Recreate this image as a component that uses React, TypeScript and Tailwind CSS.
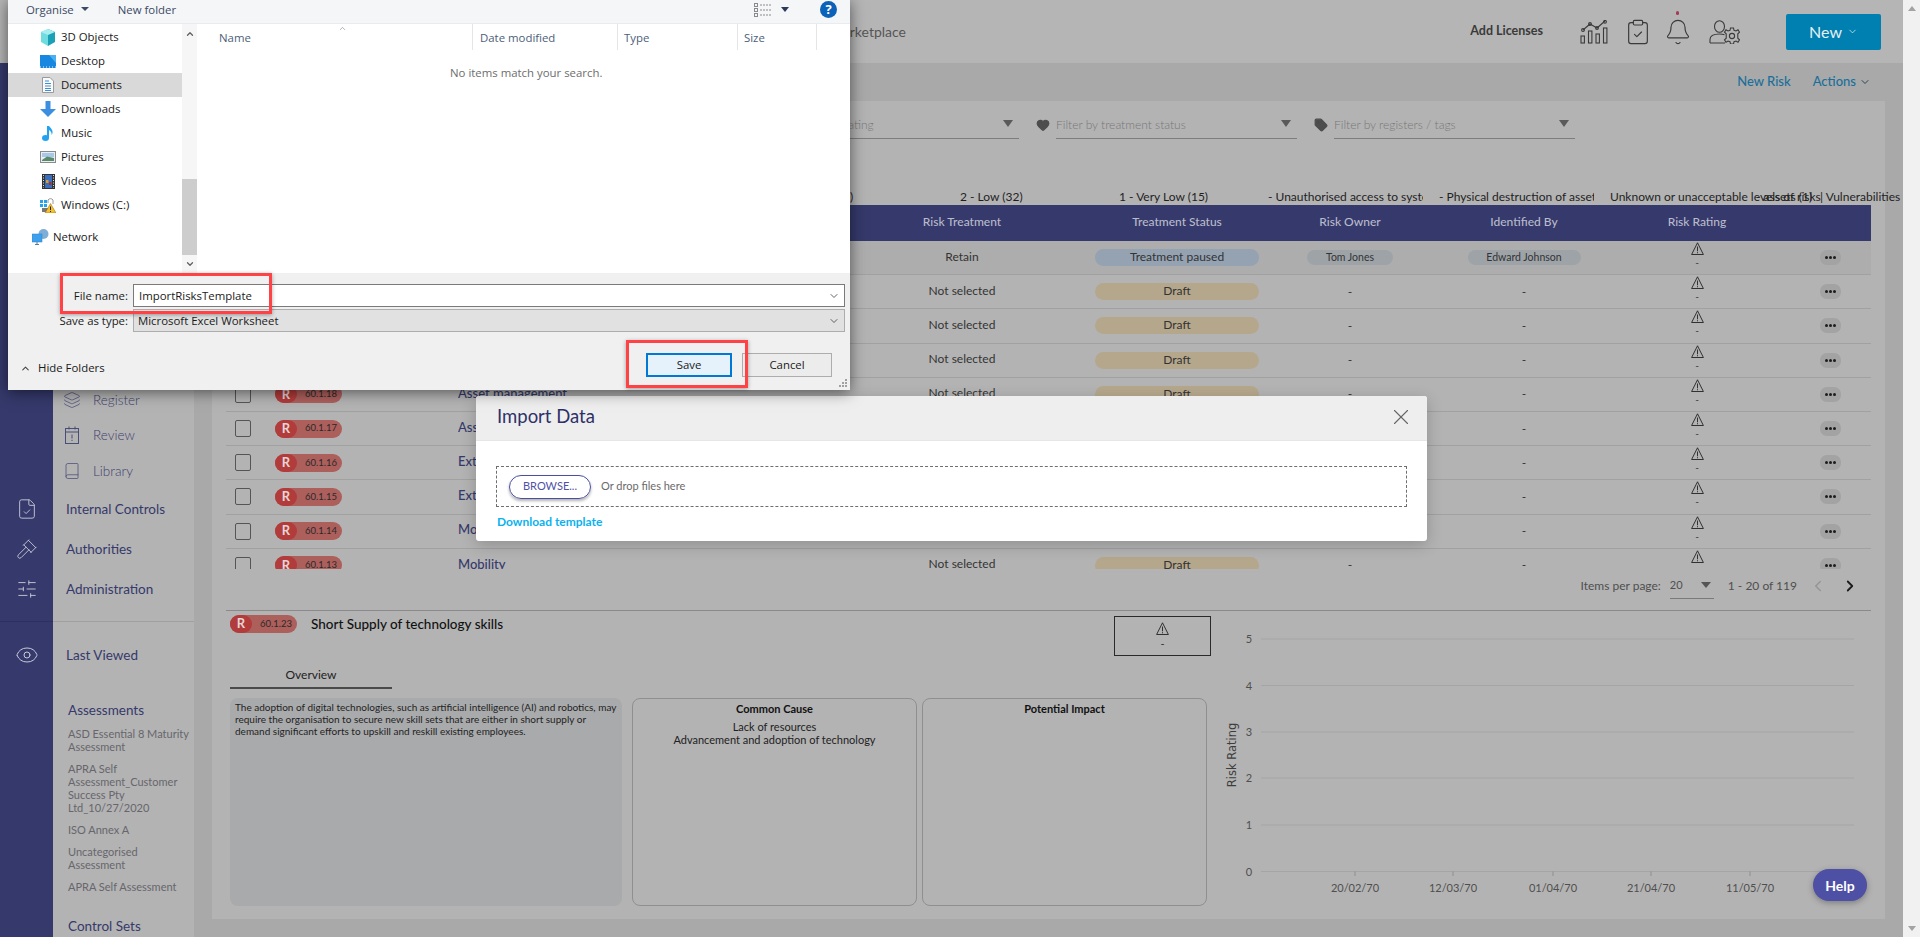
import React from "react";
import { Bell, Book, ChevronDown, ChevronLeft, ChevronRight, ChevronUp, ClipboardCheck, Eye, FileCheck, Gavel, Heart, Layers, SlidersHorizontal, Tag, X } from "lucide-react";

const rows = [
  ["60.1.23", "Short Supply of technology skills", "Retain", "Treatment paused", "Tom Jones", "Edward Johnson"],
  ["60.1.21", "Cyber security breach", "Not selected", "Draft", "-", "-"],
  ["60.1.20", "Data loss", "Not selected", "Draft", "-", "-"],
  ["60.1.19", "Asset management", "Not selected", "Draft", "-", "-"],
  ["60.1.18", "Asset management", "Not selected", "Draft", "-", "-"],
  ["60.1.17", "Asset management", "Not selected", "Draft", "-", "-"],
  ["60.1.16", "External parties", "Not selected", "Draft", "-", "-"],
  ["60.1.15", "External parties", "Not selected", "Draft", "-", "-"],
  ["60.1.14", "Mobility", "Not selected", "Draft", "-", "-"],
  ["60.1.13", "Mobility", "Not selected", "Draft", "-", "-"],
];

function Warn() {
  return (
    <svg width="13" height="13" viewBox="0 0 13 13" fill="none" stroke="#222222" strokeWidth="0.9">
      <path d="M6.500 0.800 L12.400 12.500 H0.600 Z" />
      <path d="M6.500 4.500 V9.300 M6.500 10.200 V11.300" />
    </svg>
  );
}

function ReviewIcon() {
  return (
    <svg width="18" height="18" viewBox="0 0 18 18" fill="none" stroke="#4a4d78" strokeWidth="1">
      <rect x="2.500" y="2.500" width="13" height="15" />
      <path d="M2.500 6 H15.500 M6 0.500 V3.500 M12 0.500 V3.500 M9 8.500 V12.500 M9 13.800 V15" />
    </svg>
  );
}

function Pill({ id }: { id: string }) {
  return (
    <div className="flex h-[18px] w-[67px] items-center rounded-full bg-[#ad5f5c] text-[9.500px] text-[#2a2a2a]">
      <span className="flex h-[18px] w-[22px] items-center justify-center rounded-full bg-[#b23b3b] text-[13px] font-bold text-[#e6d4d4]">R</span>
      <span className="ml-[8px]">{id}</span>
    </div>
  );
}

function ChartIcon() {
  return (
    <svg width="28" height="24" viewBox="0 0 28 24" fill="none" stroke="#3a3a3a" strokeWidth="1.1">
      <rect x="1" y="16" width="3.400" height="7" />
      <rect x="8.500" y="11" width="3.400" height="12" />
      <rect x="16" y="14" width="3.400" height="9" />
      <rect x="23.500" y="8" width="3.400" height="15" />
      <path d="M3 10 L10 4 L17 8 L25 1" />
      <circle cx="3" cy="10" r="1.400" />
      <circle cx="10" cy="4" r="1.400" />
      <circle cx="17" cy="8" r="1.400" />
      <circle cx="25" cy="1.800" r="1.400" />
    </svg>
  );
}

function UserGear() {
  return (
    <svg width="31" height="24" viewBox="0 0 31 24" fill="none" stroke="#3a3a3a" strokeWidth="1.1">
      <ellipse cx="10.500" cy="6.500" rx="5" ry="5.800" />
      <path d="M1 23 V19.500 C1 15.500 5 14 10.500 14 C12.500 14 14 14.200 15.500 14.700 M1 23 H16" />
      <circle cx="23" cy="16" r="2.600" />
      <path d="M21.500 8 H24.500 L25 10.300 L27 11 L29 9.800 L30.500 12.200 L28.800 13.800 V18.200 L30.500 19.800 L29 22.200 L27 21 L25 21.700 L24.500 24 H21.500 L21 21.700 L19 21 L17 22.200 L15.500 19.800 L17.200 18.200 V13.800 L15.500 12.200 L17 9.800 L19 11 L21 10.300 Z" />
    </svg>
  );
}

function Filter({ icon, text, width }: { icon?: React.ReactNode; text: string; width: string }) {
  return (
    <div className="flex items-end">
      <div className="mb-[7px] flex w-[20px] justify-start">{icon}</div>
      <div className={`flex h-[24px] items-center justify-between border-b border-[#7d7d7d] pb-[3px] pr-[6px] ${width}`}>
        <span className="text-[12px] font-light text-[#777777]">{text}</span>
        <span className="mb-[3px] h-0 w-0 border-x-[5px] border-t-[7px] border-x-transparent border-t-[#5a5a5a]" />
      </div>
    </div>
  );
}

function Rating() {
  return (
    <div className="mb-[5px] flex flex-col items-center text-[10px] leading-[11px] text-[#333333]">
      <Warn />
      <span className="mt-[2px]">-</span>
    </div>
  );
}

function Row({ r, i }: { r: string[]; i: number }) {
  const paused = r[3] !== "Draft";
  return (
    <div className={`grid h-[34.2px] grid-cols-[42px_190px_374px_260px_170px_176px_172px_174px_87px] items-center border-b border-[#a1a1a1] text-[12px] text-[#333333] ${i === 0 ? "bg-[#adadad]" : ""}`}>
      <div className="pl-[9px]">
        <div className="h-[17px] w-[16px] rounded-[2px] border border-[#555555]" />
      </div>
      <div className="pl-[7px]"><Pill id={r[0]} /></div>
      <div className="truncate pb-[2px] text-[13px] font-medium text-[#35396b]">{r[1]}</div>
      <div className="pb-[2px] text-center">{r[2]}</div>
      <div className="flex justify-center">
        <span className={`flex h-[17px] w-[164px] items-center justify-center rounded-[9px] pb-[1px] ${paused ? "bg-[#95a2b2]" : "bg-[#b5a78c]"}`}>{r[3]}</span>
      </div>
      <div className="flex justify-center">
        {r[4] === "-" ? <span>-</span> : <span className="flex h-[15px] w-[86px] items-center justify-center rounded-[8px] bg-[#9ea3a8] text-[10.500px]">{r[4]}</span>}
      </div>
      <div className="flex justify-center">
        {r[5] === "-" ? <span>-</span> : <span className="flex h-[15px] w-[113px] items-center justify-center rounded-[8px] bg-[#9ea3a8] text-[10.500px]">{r[5]}</span>}
      </div>
      <div className="flex justify-center"><Rating /></div>
      <div className="flex justify-center pl-[5px]">
        <span className="flex h-[15px] w-[21px] items-center justify-center gap-[1px] rounded-[7px] bg-[#a3a3a3]">
          <i className="h-[3px] w-[3px] rounded-full bg-[#1d1d1d]" />
          <i className="h-[3px] w-[3px] rounded-full bg-[#1d1d1d]" />
          <i className="h-[3px] w-[3px] rounded-full bg-[#1d1d1d]" />
        </span>
      </div>
    </div>
  );
}

function NavIcon({ name }: { name: string }) {
  if (name === "3d")
    return (
      <svg width="16" height="17" viewBox="0 0 16 17">
        <path d="M8 0 L15 3 V13 L8 17 Z" fill="#1ba1b5" />
        <path d="M8 0 L1 3 V13 L8 17 Z" fill="#6fdde0" />
        <path d="M1 3 L8 0 L15 3 L8 6 Z" fill="#a8eef0" />
      </svg>
    );
  if (name === "desktop")
    return (
      <svg width="16" height="13" viewBox="0 0 16 13">
        <rect width="16" height="13" fill="#1787e0" />
        <path d="M0 12 H16" stroke="#e8f4ff" strokeDasharray="1 2" />
        <path d="M9 0 L16 0 V8 Z" fill="#4ab0f2" />
      </svg>
    );
  if (name === "docs")
    return (
      <svg width="12" height="16" viewBox="0 0 12 16" fill="none">
        <path d="M.5.5 H8 L11.5 4 V15.5 H.5 Z" fill="#fafafa" stroke="#9a9a9a" />
        <path d="M3 4 H7 M3 6.5 H9 M3 9 H9 M3 11.500 H9 M3 13.500 H9" stroke="#3a8fd6" />
      </svg>
    );
  if (name === "down")
    return (
      <svg width="16" height="16" viewBox="0 0 16 16">
        <path d="M5.500 0 H10.500 V8 H16 L8 16 L0 8 H5.500 Z" fill="#3c8fe0" />
      </svg>
    );
  if (name === "music")
    return (
      <svg width="12" height="16" viewBox="0 0 12 16">
        <ellipse cx="3.500" cy="13" rx="3.500" ry="3" fill="#21a3ef" />
        <path d="M5 1 V13 H7 V5 C9 6 10 8 9.500 10 C12 7 10 4 7 1 Z" fill="#21a3ef" />
      </svg>
    );
  if (name === "pics")
    return (
      <svg width="16" height="12" viewBox="0 0 16 12">
        <rect x=".5" y=".5" width="15" height="11" fill="#e8eef4" stroke="#8a8a8a" />
        <rect x="2" y="2" width="12" height="4" fill="#a8c8e8" />
        <path d="M2 9 L7 5.500 L14 7 V10 H2 Z" fill="#5a8a6a" />
      </svg>
    );
  if (name === "video")
    return (
      <svg width="13" height="15" viewBox="0 0 13 15">
        <rect width="13" height="15" fill="#333333" />
        <rect x="3" y="1" width="7" height="13" fill="#3a6fc0" />
        <rect x="4" y="6" width="2.500" height="3" fill="#d8a030" />
        <rect x="7" y="8" width="2.500" height="3" fill="#a03030" />
        <path d="M1.500 1 V14 M11.500 1 V14" stroke="#dddddd" strokeDasharray="1 1.500" />
      </svg>
    );
  if (name === "win")
    return (
      <svg width="16" height="16" viewBox="0 0 16 16">
        <rect x="0" y="3" width="3" height="3" fill="#21a3ef" />
        <rect x="4" y="3" width="3" height="3" fill="#21a3ef" />
        <rect x="0" y="7" width="3" height="3" fill="#21a3ef" />
        <rect x="4" y="7" width="3" height="3" fill="#21a3ef" />
        <rect x="2" y="11" width="6" height="4" fill="#777777" />
        <path d="M8 6 V3 A3 3 0 0 1 13 3 V7" fill="none" stroke="#999999" />
        <path d="M10.500 6.500 L16 16 H5 Z" fill="#f5c02c" stroke="#8a6a10" strokeWidth=".5" />
        <path d="M10.500 9.500 V13 M10.500 14 V15" stroke="#222222" />
      </svg>
    );
  return (
    <svg width="17" height="16" viewBox="0 0 17 16">
      <circle cx="11.500" cy="5" r="5" fill="#7eaed6" />
      <rect x="0" y="5" width="10" height="8" fill="#3ea0ec" stroke="#2a7fc5" strokeWidth=".5" />
      <path d="M3 15.500 H7 M5 13 V15" stroke="#5a7a9a" />
    </svg>
  );
}

const navItems = [
  ["3d", "3D Objects"],
  ["desktop", "Desktop"],
  ["docs", "Documents"],
  ["down", "Downloads"],
  ["music", "Music"],
  ["pics", "Pictures"],
  ["video", "Videos"],
  ["win", "Windows (C:)"],
];

function SaveDialog() {
  return (
    <div className="absolute left-[8px] top-0 flex h-[390px] w-[842px] flex-col bg-white font-['Open_Sans',sans-serif] text-[11.400px] text-[#1a1a1a] shadow-[0_2px_14px_rgba(0,0,0,0.55)]">
      <div className="flex h-[24px] items-start border-b border-[#e8ebef] bg-[#f5f6f7] pl-[18px] pt-px text-[#3b4a66]">
        <span>Organise</span>
        <span className="ml-[7px] mt-[6px] h-0 w-0 border-x-[4px] border-t-[4px] border-x-transparent border-t-[#3b4a66]" />
        <span className="ml-[29px]">New folder</span>
        <div className="ml-auto mr-[13px] flex items-center">
          <svg width="18" height="14" viewBox="0 0 18 14" fill="none" stroke="#8a8a8a">
            <rect x=".5" y=".5" width="3" height="3" />
            <rect x=".5" y="5.500" width="3" height="3" />
            <rect x=".5" y="10.500" width="3" height="3" />
            <path d="M6 2 H17 M6 7 H17 M6 12 H17" strokeDasharray="2 1" />
          </svg>
          <span className="ml-[9px] h-0 w-0 border-x-[4px] border-t-[5px] border-x-transparent border-t-[#2b3a58]" />
          <span className="ml-[31px] flex h-[17px] w-[17px] items-center justify-center rounded-full bg-[#0b62b8] text-[13px] font-bold leading-none text-white">?</span>
        </div>
      </div>
      <div className="flex h-[249px]">
        <div className="w-[174px] pt-px">
          {navItems.map(([k, t]) => (
            <div key={k} className={`flex h-[24px] items-center ${k === "docs" ? "bg-[#d9d9d9]" : ""}`}>
              <div className="ml-[32px] flex w-[16px] justify-center"><NavIcon name={k} /></div>
              <span className="ml-[5px]">{t}</span>
            </div>
          ))}
          <div className="mt-[8px] flex h-[24px] items-center">
            <div className="ml-[24px] w-[16px]"><NavIcon name="net" /></div>
            <span className="ml-[5px]">Network</span>
          </div>
        </div>
        <div className="flex w-[15px] flex-col items-center bg-[#f6f6f6] pt-[5px]">
          <ChevronUp size={10} strokeWidth={3} color="#606060" />
          <div className="mt-[140px] h-[76px] w-[15px] bg-[#cdcdcd]" />
          <ChevronDown className="mt-[4px]" size={10} strokeWidth={3} color="#606060" />
        </div>
        <div className="relative flex-1">
          <ChevronUp className="absolute left-[141px] top-0" size={9} strokeWidth={1.2} color="#555555" />
          <div className="flex h-[26px] items-start text-[#4c607a]">
            <div className="flex h-[26px] w-[276px] items-center border-r border-[#e5e5e5] pl-[22px] pt-[2px]">Name</div>
            <div className="flex h-[26px] w-[145px] items-center border-r border-[#e5e5e5] pl-[7px] pt-[2px]">Date modified</div>
            <div className="flex h-[26px] w-[120px] items-center border-r border-[#e5e5e5] pl-[6px] pt-[2px]">Type</div>
            <div className="flex h-[26px] w-[79px] items-center border-r border-[#e5e5e5] pl-[6px] pt-[2px]">Size</div>
          </div>
          <div className="ml-[253px] mt-[14px] text-[#6d6d6d]">No items match your search.</div>
        </div>
      </div>
      <div className="relative flex-1 bg-[#f0f0f0] pt-[11px]">
        <div className="flex h-[23px] items-center">
          <span className="w-[120px] text-right">File name:</span>
          <div className="ml-[5px] flex h-[23px] w-[712px] items-center justify-between border border-[#7a7a7a] bg-white pl-[5px] pr-[4px]">
            <span>ImportRisksTemplate</span>
            <ChevronDown size={12} strokeWidth={1.5} color="#333333" />
          </div>
        </div>
        <div className="mt-[2px] flex h-[23px] items-center">
          <span className="w-[120px] text-right">Save as type:</span>
          <div className="ml-[5px] flex h-[23px] w-[712px] items-center justify-between border border-[#adadad] bg-[#e1e1e1] pl-[4px] pr-[4px]">
            <span>Microsoft Excel Worksheet</span>
            <ChevronDown size={12} strokeWidth={1.5} color="#333333" />
          </div>
        </div>
        <div className="mt-[21px] flex h-[24px] items-center pr-[18px]">
          <ChevronUp className="ml-[12px] mt-[6px]" size={11} strokeWidth={2.2} color="#444444" />
          <span className="ml-[7px] mt-[6px]">Hide Folders</span>
          <div className="ml-auto flex h-[24px] w-[86px] items-center justify-center border-2 border-[#0078d7] bg-[#e5f1fb]">Save</div>
          <div className="ml-[10px] flex h-[24px] w-[90px] items-center justify-center border border-[#adadad] bg-[#ececec]">Cancel</div>
        </div>
        <svg className="absolute bottom-[2px] right-[2px]" width="9" height="9" viewBox="0 0 9 9" fill="#a0a0a0">
          <rect x="6" y="0" width="2" height="2" /><rect x="3" y="3" width="2" height="2" /><rect x="6" y="3" width="2" height="2" />
          <rect x="0" y="6" width="2" height="2" /><rect x="3" y="6" width="2" height="2" /><rect x="6" y="6" width="2" height="2" />
        </svg>
      </div>
    </div>
  );
}

function Chart() {
  const ys = [[5, 639], [4, 685.5], [3, 732], [2, 778], [1, 825], [0, 871.5]] as const;
  const xs = [[1355, "20/02/70"], [1453, "12/03/70"], [1553, "01/04/70"], [1651, "21/04/70"], [1750, "11/05/70"], [1849, "31/05/70"]] as const;
  return (
    <svg width="647" height="294" viewBox="1220 616 647 294" className="block">
      {ys.map(([n, y]) => (
        <g key={n}>
          <line x1="1261" x2="1854" y1={y} y2={y} stroke="#a5a5a5" strokeWidth={n === 0 ? 1.2 : 1} />
          <text x="1249" y={y + 4} textAnchor="middle" fontSize="11" fill="#4f4f4f" fontFamily="Lato, sans-serif">{n}</text>
        </g>
      ))}
      {xs.map(([x, t]) => (
        <g key={t}>
          <line x1={x} x2={x} y1="871.500" y2="876" stroke="#8f8f8f" />
          <text x={x} y="892" textAnchor="middle" fontSize="11" fill="#4f4f4f" fontFamily="Lato, sans-serif">{t}</text>
        </g>
      ))}
      <text transform="translate(1236 755) rotate(-90)" textAnchor="middle" fontSize="11.500" fill="#3d3d3d" fontFamily="'DejaVu Sans', sans-serif">Risk Rating</text>
    </svg>
  );
}

export default function App() {
  const sideTop: [string, React.ReactNode][] = [
    ["Register", <Layers size={18} strokeWidth={1} color="#4a4d78" />],
    ["Review", <ReviewIcon />],
    ["Library", <Book size={18} strokeWidth={1} color="#4a4d78" />],
  ];
  return (
    <div className="relative flex h-[937px] w-[1920px] overflow-hidden bg-[#a9a9a9] font-[Lato,sans-serif]">
      <div className="flex w-[1903px] flex-col">
        <header className="flex h-[63px] items-center bg-[#b5b5b5] pl-[830px] pr-[22px]">
          <span className="text-[14px] text-[#555555]">Marketplace</span>
          <span className="ml-auto text-[12.500px] font-bold text-[#3a3a3a]">Add Licenses</span>
          <div className="ml-[37px]"><ChartIcon /></div>
          <ClipboardCheck className="ml-[16px]" size={28} strokeWidth={1} color="#3a3a3a" />
          <div className="relative ml-[12px]">
            <Bell size={28} strokeWidth={1} color="#3a3a3a" />
            <span className="absolute left-[12px] top-[-7px] h-[4px] w-[3px] rounded-full bg-[#a33a55]" />
          </div>
          <div className="ml-[17px]"><UserGear /></div>
          <div className="ml-[46px] flex h-[36px] w-[95px] items-center justify-center gap-[5px] rounded-[2px] bg-[#0080b0] text-[16px] text-[#e6eff4]">
            New <ChevronDown size={11} strokeWidth={1.6} />
          </div>
        </header>
        <div className="flex flex-1">
          <aside className="w-[53px] bg-[#35396b]">
            <div className="flex h-[559px] flex-col items-center gap-[18px] border-b border-[#2d3060] pt-[435px]">
              <FileCheck size={22} strokeWidth={1} color="#c9cad8" />
              <Gavel size={22} strokeWidth={1} color="#c9cad8" />
              <SlidersHorizontal size={22} strokeWidth={1} color="#c9cad8" />
            </div>
            <div className="mt-[21px] flex justify-center"><Eye size={24} strokeWidth={1} color="#c9cad8" /></div>
          </aside>
          <nav className="w-[141px] bg-[#b3b3b3] text-[#35396b]">
            <div className="flex h-[559px] flex-col border-b border-[#a0a0a0] pt-[319px]">
              {sideTop.map(([t, icon]) => (
                <div key={t} className="flex h-[35.5px] items-center pl-[10px] text-[13.500px] font-light text-[#3e416e]">
                  {icon}
                  <span className="ml-[12px]">{t}</span>
                </div>
              ))}
              <div className="ml-[13px] mt-[12px] text-[13.500px] leading-[16px]">Internal Controls</div>
              <div className="ml-[13px] mt-[24px] text-[13.500px] leading-[16px]">Authorities</div>
              <div className="ml-[13px] mt-[24px] text-[13.500px] leading-[16px]">Administration</div>
            </div>
            <div className="ml-[13px] mt-[25px] text-[13.500px] leading-[16px]">Last Viewed</div>
            <div className="ml-[15px] mt-[39px] text-[13.500px] leading-[16px]">Assessments</div>
            <div className="ml-[15px] mt-[9px] flex flex-col gap-[9px] text-[11px] leading-[13px] text-[#66666c]">
              <div>ASD Essential 8 Maturity Assessment</div>
              <div>APRA Self Assessment_Customer Success Pty Ltd_10/27/2020</div>
              <div>ISO Annex A</div>
              <div>Uncategorised Assessment</div>
              <div>APRA Self Assessment</div>
            </div>
            <div className="ml-[15px] mt-[25px] text-[13.500px] leading-[16px]">Control Sets</div>
          </nav>
          <main className="flex flex-1 flex-col">
            <div className="flex h-[38px] items-center justify-end pr-[32px] text-[13px] font-medium text-[#1a6f9a]">
              <span>New Risk</span>
              <span className="ml-[22px]">Actions</span>
              <ChevronDown className="ml-[3px]" size={12} strokeWidth={1.8} color="#1d3a48" />
            </div>
            <div className="ml-[18px] h-[818px] w-[1673px] bg-[#b3b3b3]">
              <div className="flex gap-[17px] pl-[546px] pt-[14px]">
                <Filter text="Filter by risk rating" width="w-[241px]" />
                <Filter icon={<Heart size={14} fill="#4d4d4d" color="#4d4d4d" />} text="Filter by treatment status" width="w-[241px]" />
                <Filter icon={<Tag size={14} fill="#4d4d4d" color="#4d4d4d" />} text="Filter by registers / tags" width="w-[241px]" />
              </div>
              <div className="ml-[638px] mt-[50px] flex h-[16px] items-center whitespace-nowrap text-[12px] leading-[16px] text-[#1f1f1f]">
                <span className="w-[110px] shrink-0">)</span>
                <span className="w-[159px] shrink-0">2 - Low (32)</span>
                <span className="w-[149px] shrink-0">1 - Very Low (15)</span>
                <span className="w-[155px] shrink-0 overflow-hidden">- Unauthorised access to systems</span>
                <span className="ml-[16px] w-[155px] shrink-0 overflow-hidden">- Physical destruction of assets</span>
                <span className="ml-[16px] w-[146px] shrink-0">Unknown or unacceptable levels of risks</span>
                <span className="w-[64px] shrink-0">- assets (1)</span>
                <span className="shrink-0">| Vulnerabilities and threats</span>
              </div>
              <div className="ml-[14px] w-[1645px]">
                <div className="grid h-[36px] grid-cols-[42px_190px_374px_260px_170px_176px_172px_174px_87px] items-center bg-[#35396b] pb-[2px] text-center text-[12px] font-medium text-[#b9bacb]">
                  <span />
                  <span>ID</span>
                  <span>Risk Title</span>
                  <span>Risk Treatment</span>
                  <span>Treatment Status</span>
                  <span>Risk Owner</span>
                  <span>Identified By</span>
                  <span>Risk Rating</span>
                  <span />
                </div>
                <div className="h-[328px] overflow-hidden">
                  {rows.map((r, i) => <Row key={r[0]} r={r} i={i} />)}
                </div>
                <div className="flex h-[42px] items-center justify-end border-b border-[#8a8a8a] pb-[8px] pr-[12px] text-[12px] text-[#4f4f4f]">
                  <span>Items per page:</span>
                  <div className="ml-[9px] flex h-[26px] w-[44px] items-center justify-between border-b border-[#7a7a7a] pr-[3px] text-[11px]">
                    <span>20</span>
                    <span className="h-0 w-0 border-x-[5px] border-t-[6px] border-x-transparent border-t-[#555555]" />
                  </div>
                  <span className="ml-[14px]">1 - 20 of 119</span>
                  <ChevronLeft className="ml-[12px]" size={18} strokeWidth={2} color="#959595" />
                  <ChevronRight className="ml-[14px]" size={18} strokeWidth={2.4} color="#1c1c1c" />
                </div>
                <div className="flex pl-[4px] pt-[5px]">
                  <div className="w-[981px]">
                    <div className="flex h-[40px] items-start justify-between">
                      <div className="-mt-[1px] flex items-center">
                        <Pill id="60.1.23" />
                        <span className="ml-[14px] text-[13.500px] font-medium leading-[16px] text-[#111111]">Short Supply of technology skills</span>
                      </div>
                      <div className="flex h-[40px] w-[97px] flex-col items-center justify-center border border-[#2a2a2a] text-[11px] leading-[12px] text-[#333333]">
                        <Warn />
                        <span className="mt-[3px]">-</span>
                      </div>
                    </div>
                    <div className="mt-[10px] w-[162px] border-b-2 border-[#4a4a4a] pb-[3px] text-center text-[12px] leading-[18px] text-[#222222]">Overview</div>
                    <div className="mt-[9px] flex h-[208px]">
                      <div className="w-[392px] rounded-[8px] bg-[#a9aaab] py-[3px] pl-[5px] pr-[3px] text-[10px] leading-[12px] text-[#232323]">
                        The adoption of digital technologies, such as artificial intelligence (AI) and robotics, may require the organisation to secure new skill sets that are either in short supply or demand significant efforts to upskill and reskill existing employees.
                      </div>
                      <div className="ml-[10px] w-[285px] rounded-[8px] border border-[#8f8f8f] pt-[3px] text-center text-[11px] leading-[13px] text-[#222222]">
                        <div className="mb-[5px] font-bold text-[#111111]">Common Cause</div>
                        <div>Lack of resources</div>
                        <div>Advancement and adoption of technology</div>
                      </div>
                      <div className="ml-[5px] w-[285px] rounded-[8px] border border-[#8f8f8f] pt-[3px] text-center text-[11px] leading-[13px]">
                        <div className="font-bold text-[#111111]">Potential Impact</div>
                      </div>
                    </div>
                  </div>
                  <div className="ml-[9px]"><Chart /></div>
                </div>
              </div>
            </div>
          </main>
        </div>
      </div>
      <div className="flex w-[17px] flex-col items-center justify-between bg-[#f1f1f1] py-[6px]">
        <span className="h-0 w-0 border-x-[4px] border-b-[5px] border-x-transparent border-b-[#a3a3a3]" />
        <span className="h-0 w-0 border-x-[4px] border-t-[5px] border-x-transparent border-t-[#a3a3a3]" />
      </div>

      <div className="absolute left-[476px] top-[396px] h-[145px] w-[951px] overflow-hidden rounded-[3px] bg-white shadow-[0_4px_16px_rgba(0,0,0,0.2)]">
        <div className="flex h-[45px] items-center justify-between border-b border-[#e6e6e6] bg-[#eeeeee] pb-[2px] pl-[21px] pr-[13px]">
          <span className="text-[18.500px] text-[#2e3168]">Import Data</span>
          <X size={26} strokeWidth={1} color="#666666" />
        </div>
        <div className="mx-[20px] mt-[25px] flex h-[41px] w-[911px] items-center border border-dashed border-[#6f6f6f] pl-[12px]">
          <span className="flex h-[24px] w-[82px] items-center justify-center rounded-full border border-[#4a4fa0] text-[11px] text-[#4f53a6] shadow-[0_2px_3px_rgba(0,0,0,0.3)]">BROWSE...</span>
          <span className="ml-[10px] text-[11px] text-[#6a6a6a]">Or drop files here</span>
        </div>
        <div className="ml-[21px] mt-[6px] text-[12px] font-bold text-[#0ab2ef]">Download template</div>
      </div>

      <SaveDialog />

      <div className="absolute left-[60px] top-[273px] h-[41px] w-[212px] border-[3px] border-[#ff4245] shadow-[0_1px_4px_rgba(0,0,0,0.35)]" />
      <div className="absolute left-[626px] top-[340px] h-[48px] w-[122px] border-[3px] border-[#ff4245] shadow-[0_1px_4px_rgba(0,0,0,0.35)]" />

      <div className="absolute left-[1813px] top-[869px] flex h-[32px] w-[54px] items-center justify-center rounded-full bg-[#4d50a5] text-[14px] font-bold text-white shadow-[0_2px_6px_rgba(0,0,0,0.3)]">Help</div>
    </div>
  );
}
